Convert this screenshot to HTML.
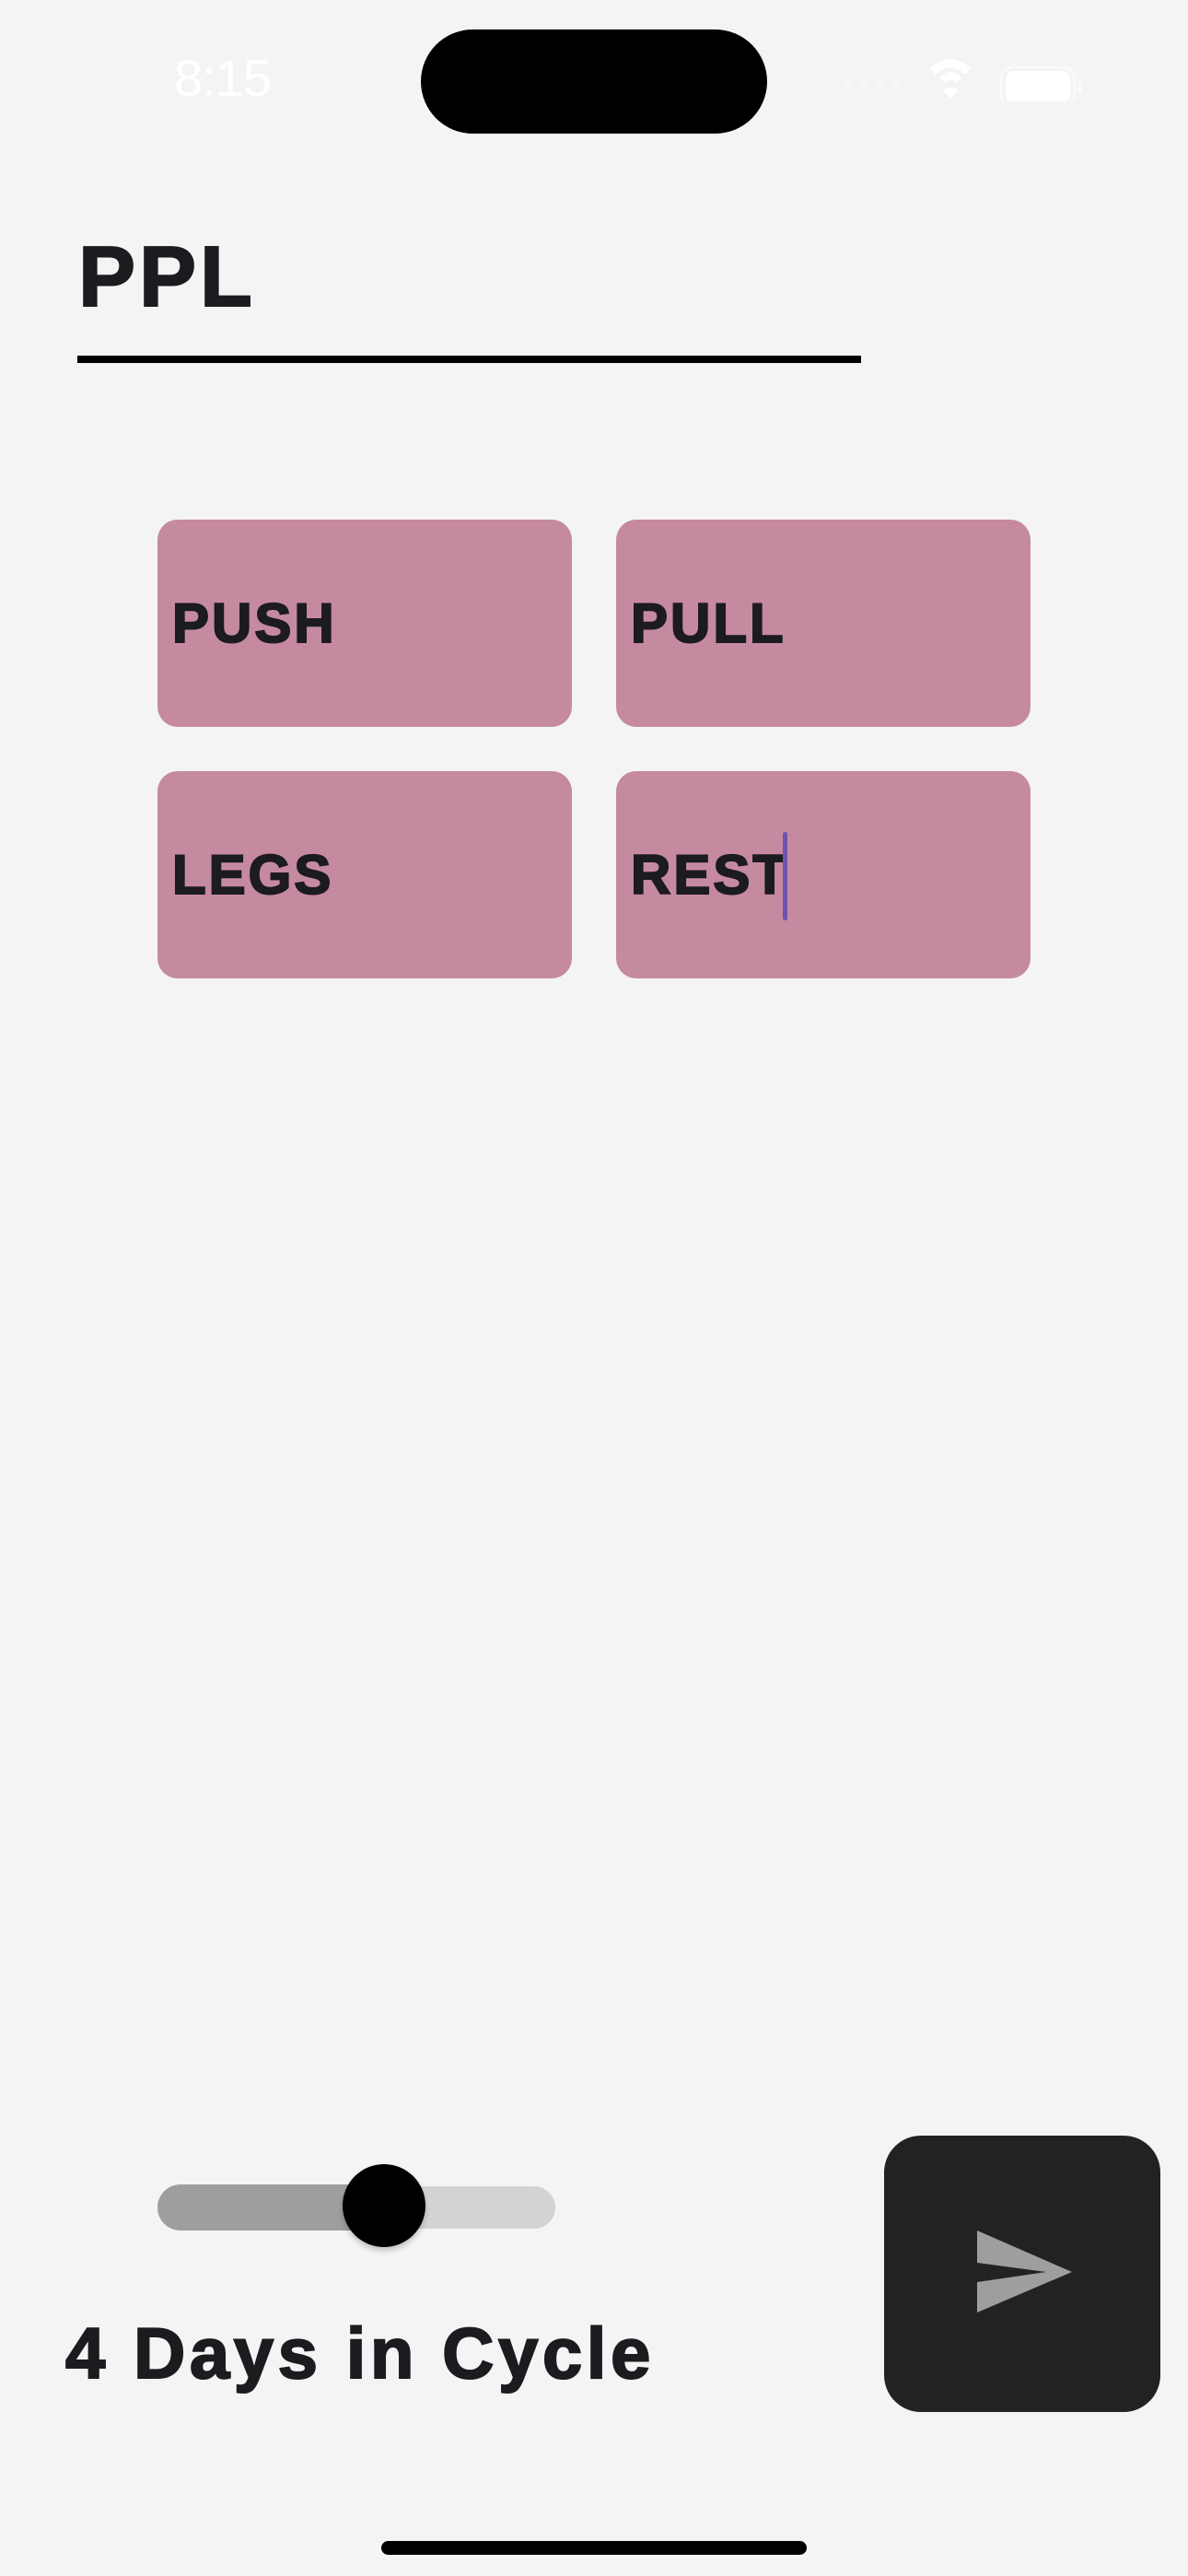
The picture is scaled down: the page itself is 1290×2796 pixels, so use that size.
<!DOCTYPE html>
<html><head><meta charset="utf-8"><style>
html,body{margin:0;padding:0}
body{width:1290px;height:2796px;background:#f4f4f4;position:relative;overflow:hidden;font-family:"Liberation Sans",sans-serif;color:#1c1b1f}
.abs{position:absolute}
.tile{position:absolute;width:450px;height:225px;background:#c58aa0;border-radius:22px}
.tile span{position:absolute;left:16px;top:83px;font-size:60px;line-height:1;font-weight:bold;letter-spacing:3px;-webkit-text-stroke:2px #1c1b1f}
</style></head><body>
<div class="abs" style="left:189px;top:57px;font-size:56px;line-height:1;color:#fff;letter-spacing:-1px">8:15</div>
<div class="abs" style="left:457px;top:32px;width:376px;height:113px;background:#000;border-radius:57px"></div>
<svg class="abs" style="left:910px;top:60px" width="280" height="50" viewBox="0 0 280 50">
<g fill="#fff" opacity="0.35"><circle cx="11" cy="32" r="5"/><circle cx="28" cy="32" r="5"/><circle cx="45" cy="32" r="5"/><circle cx="62" cy="32" r="5"/></g>
<path d="M100 14 Q122 -6 144 14 L138 21 Q122 6 106 21Z M110 24 Q122 12 134 24 L128 30 Q122 24 116 30Z M122 47 L114 38 Q122 32 130 38Z" fill="#fff"/>
<rect x="177" y="13" width="80" height="42" rx="13" fill="none" stroke="#fff" stroke-width="3" opacity="0.5"/>
<rect x="182" y="17" width="70" height="34" rx="9" fill="#fff"/>
<rect x="260" y="28" width="5" height="13" rx="2" fill="#fff" opacity="0.5"/>
</svg>
<div class="abs" style="left:85px;top:254px;font-size:93px;line-height:1;font-weight:bold;letter-spacing:4px;-webkit-text-stroke:2px #1c1b1f">PPL</div>
<div class="abs" style="left:84px;top:386px;width:851px;height:8px;background:#000"></div>
<div class="tile" style="left:171px;top:564px"><span>PUSH</span></div>
<div class="tile" style="left:669px;top:564px"><span>PULL</span></div>
<div class="tile" style="left:171px;top:837px"><span>LEGS</span></div>
<div class="tile" style="left:669px;top:837px"><span>REST</span></div>
<div class="abs" style="left:850px;top:903px;width:5px;height:96px;background:#6a55b0;border-radius:3px"></div>
<div class="abs" style="left:171px;top:2371px;width:260px;height:50px;background:#9e9e9e;border-radius:25px"></div>
<div class="abs" style="left:400px;top:2373px;width:203px;height:46px;background:#d3d3d3;border-radius:0 23px 23px 0"></div>
<div class="abs" style="left:372px;top:2349px;width:90px;height:90px;background:#000;border-radius:50%;box-shadow:0 4px 6px rgba(0,0,0,0.2)"></div>
<div class="abs" style="left:71px;top:2515px;font-size:78px;line-height:1;font-weight:bold;letter-spacing:4.5px;-webkit-text-stroke:2px #1c1b1f">4 Days in Cycle</div>
<div class="abs" style="left:960px;top:2318px;width:300px;height:300px;background:#222;border-radius:40px"></div>
<svg class="abs" style="left:0;top:0" width="1290" height="2796"><path d="M1061 2421 L1164 2466 L1061 2510 L1061 2477 L1136 2466 L1061 2456Z" fill="#9e9e9e"/></svg>
<div class="abs" style="left:414px;top:2758px;width:462px;height:15px;background:#000;border-radius:8px"></div>
</body></html>
